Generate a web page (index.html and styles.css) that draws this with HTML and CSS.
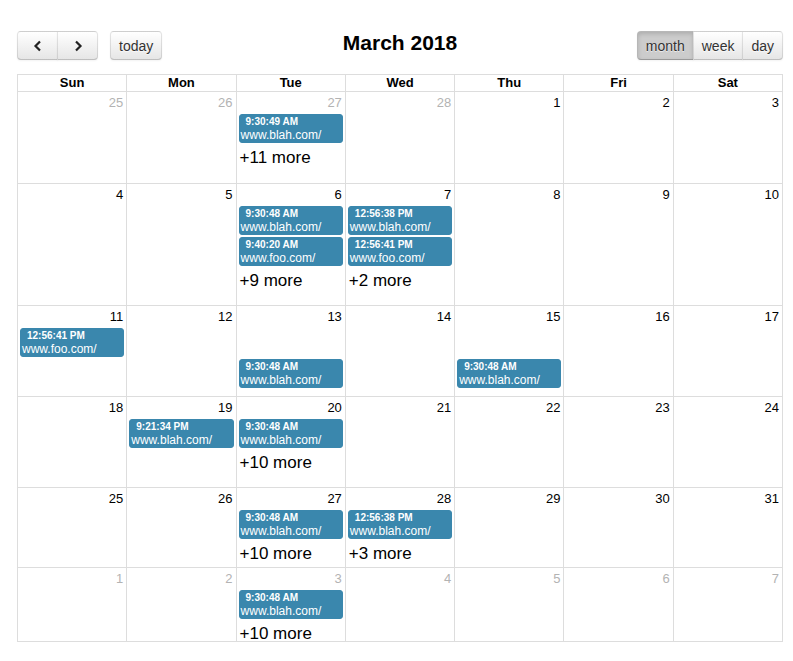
FILE: index.html
```html
<!DOCTYPE html>
<html>
<head>
<meta charset="utf-8">
<link rel="stylesheet" href="styles.css">
</head>
<body>
<div class="cal">
  <div class="toolbar">
    <div class="tb-left">
      <div class="btn-group">
        <button class="btn btn-icon"><svg width="10" height="12" viewBox="0 0 10 12"><path d="M7 1.5 L2.5 6 L7 10.5" fill="none" stroke="#222" stroke-width="2.2"/></svg></button>
        <button class="btn btn-icon"><svg width="10" height="12" viewBox="0 0 10 12"><path d="M3 1.5 L7.5 6 L3 10.5" fill="none" stroke="#222" stroke-width="2.2"/></svg></button>
      </div>
      <div class="btn-group"><button class="btn">today</button></div>
    </div>
    <h2 class="title">March 2018</h2>
    <div class="tb-right">
      <div class="btn-group">
        <button class="btn active">month</button>
        <button class="btn">week</button>
        <button class="btn">day</button>
      </div>
    </div>
  </div>

  <div class="grid">
    <div class="head">
      <div class="dow">Sun</div><div class="dow">Mon</div><div class="dow">Tue</div><div class="dow">Wed</div><div class="dow">Thu</div><div class="dow">Fri</div><div class="dow">Sat</div>
    </div>

    <div class="week wk1">
      <div class="day other"><div class="num">25</div></div>
      <div class="day other"><div class="num">26</div></div>
      <div class="day other"><div class="num">27</div>
        <div class="ev"><div class="ev-time">9:30:49 AM</div><div class="ev-title">www.blah.com/</div></div>
        <div class="more">+11 more</div>
      </div>
      <div class="day other"><div class="num">28</div></div>
      <div class="day"><div class="num">1</div></div>
      <div class="day"><div class="num">2</div></div>
      <div class="day"><div class="num">3</div></div>
    </div>

    <div class="week wk2">
      <div class="day"><div class="num">4</div></div>
      <div class="day"><div class="num">5</div></div>
      <div class="day"><div class="num">6</div>
        <div class="ev"><div class="ev-time">9:30:48 AM</div><div class="ev-title">www.blah.com/</div></div>
        <div class="ev"><div class="ev-time">9:40:20 AM</div><div class="ev-title">www.foo.com/</div></div>
        <div class="more">+9 more</div>
      </div>
      <div class="day"><div class="num">7</div>
        <div class="ev"><div class="ev-time">12:56:38 PM</div><div class="ev-title">www.blah.com/</div></div>
        <div class="ev"><div class="ev-time">12:56:41 PM</div><div class="ev-title">www.foo.com/</div></div>
        <div class="more">+2 more</div>
      </div>
      <div class="day"><div class="num">8</div></div>
      <div class="day"><div class="num">9</div></div>
      <div class="day"><div class="num">10</div></div>
    </div>

    <div class="week wk3">
      <div class="day"><div class="num">11</div>
        <div class="ev"><div class="ev-time">12:56:41 PM</div><div class="ev-title">www.foo.com/</div></div>
      </div>
      <div class="day"><div class="num">12</div></div>
      <div class="day"><div class="num">13</div>
        <div class="ev-spacer"></div>
        <div class="ev"><div class="ev-time">9:30:48 AM</div><div class="ev-title">www.blah.com/</div></div>
      </div>
      <div class="day"><div class="num">14</div></div>
      <div class="day"><div class="num">15</div>
        <div class="ev-spacer"></div>
        <div class="ev"><div class="ev-time">9:30:48 AM</div><div class="ev-title">www.blah.com/</div></div>
      </div>
      <div class="day"><div class="num">16</div></div>
      <div class="day"><div class="num">17</div></div>
    </div>

    <div class="week wk4">
      <div class="day"><div class="num">18</div></div>
      <div class="day"><div class="num">19</div>
        <div class="ev"><div class="ev-time">9:21:34 PM</div><div class="ev-title">www.blah.com/</div></div>
      </div>
      <div class="day"><div class="num">20</div>
        <div class="ev"><div class="ev-time">9:30:48 AM</div><div class="ev-title">www.blah.com/</div></div>
        <div class="more">+10 more</div>
      </div>
      <div class="day"><div class="num">21</div></div>
      <div class="day"><div class="num">22</div></div>
      <div class="day"><div class="num">23</div></div>
      <div class="day"><div class="num">24</div></div>
    </div>

    <div class="week wk5">
      <div class="day"><div class="num">25</div></div>
      <div class="day"><div class="num">26</div></div>
      <div class="day"><div class="num">27</div>
        <div class="ev"><div class="ev-time">9:30:48 AM</div><div class="ev-title">www.blah.com/</div></div>
        <div class="more">+10 more</div>
      </div>
      <div class="day"><div class="num">28</div>
        <div class="ev"><div class="ev-time">12:56:38 PM</div><div class="ev-title">www.blah.com/</div></div>
        <div class="more">+3 more</div>
      </div>
      <div class="day"><div class="num">29</div></div>
      <div class="day"><div class="num">30</div></div>
      <div class="day"><div class="num">31</div></div>
    </div>

    <div class="week wk6">
      <div class="day other"><div class="num">1</div></div>
      <div class="day other"><div class="num">2</div></div>
      <div class="day other"><div class="num">3</div>
        <div class="ev"><div class="ev-time">9:30:48 AM</div><div class="ev-title">www.blah.com/</div></div>
        <div class="more">+10 more</div>
      </div>
      <div class="day other"><div class="num">4</div></div>
      <div class="day other"><div class="num">5</div></div>
      <div class="day other"><div class="num">6</div></div>
      <div class="day other"><div class="num">7</div></div>
    </div>
  </div>
</div>
</body>
</html>
```

FILE: styles.css
```css
* { box-sizing: border-box; }
html, body { margin: 0; padding: 0; background: #fff; }
body {
  font-family: "Liberation Sans", Arial, sans-serif;
  color: #000;
}
.cal {
  padding: 31px 10px 0 17px;
}
.toolbar {
  display: grid;
  grid-template-columns: 1fr auto 1fr;
  align-items: start;
  margin-bottom: 14px;
}
.tb-left { display: flex; gap: 12px; }
.tb-right { display: flex; justify-content: flex-end; }
.title {
  margin: 0;
  font-size: 21px;
  font-weight: bold;
  line-height: 23px;
  color: #000;
}
.btn-group { display: flex; }
.btn {
  font-family: "Liberation Sans", Arial, sans-serif;
  font-size: 14px;
  height: 29px;
  padding: 0 8px;
  margin: 0;
  color: #333;
  border: 1px solid;
  border-color: rgba(0,0,0,.1) rgba(0,0,0,.1) rgba(0,0,0,.25);
  background-color: #f5f5f5;
  background-image: linear-gradient(to bottom, #fff, #e6e6e6);
  text-shadow: 0 1px 1px rgba(255,255,255,.75);
  box-shadow: inset 0 1px 0 rgba(255,255,255,.2), 0 1px 2px rgba(0,0,0,.05);
  border-radius: 0;
  cursor: pointer;
}
.btn + .btn { margin-left: -1px; }
.btn:first-child { border-top-left-radius: 4px; border-bottom-left-radius: 4px; }
.btn:last-child { border-top-right-radius: 4px; border-bottom-right-radius: 4px; }
.btn-icon {
  width: 41px;
  padding: 0;
  display: flex;
  align-items: center;
  justify-content: center;
}
.btn-icon svg { display: block; }
.btn.active {
  background-color: #ccc;
  background-image: none;
  box-shadow: inset 0 2px 4px rgba(0,0,0,.15), 0 1px 2px rgba(0,0,0,.05);
}

.grid {
  border-top: 1px solid #ddd;
  border-left: 1px solid #ddd;
}
.head, .week {
  display: grid;
  grid-template-columns: repeat(7, 1fr);
}
.dow {
  height: 17px;
  border-right: 1px solid #ddd;
  border-bottom: 1px solid #ddd;
  text-align: center;
  font-weight: bold;
  font-size: 13px;
  line-height: 16px;
}
.day {
  border-right: 1px solid #ddd;
  border-bottom: 1px solid #ddd;
  min-width: 0;
  overflow: hidden;
}
.wk1 { height: 92px; }
.wk2 { height: 122px; }
.wk3 { height: 91px; }
.wk4 { height: 91px; }
.wk5 { height: 80px; }
.wk6 { height: 74px; }

.num {
  height: 22px;
  padding: 3px 3px 0 0;
  text-align: right;
  font-size: 13px;
  line-height: 16px;
  color: #000;
}
.other .num { color: #b3b3b3; }

.ev {
  margin: 0 2px;
  padding: 0 1px;
  background: #3a87ad;
  border: 1px solid #3a87ad;
  border-radius: 3px;
  color: #fff;
  white-space: nowrap;
  overflow: hidden;
}
.ev + .ev { margin-top: 2px; }
.ev-spacer { height: 31px; }
.ev-time {
  font-size: 10px;
  font-weight: bold;
  line-height: 13px;
  padding-left: 5px;
}
.ev-title {
  font-size: 12px;
  line-height: 14px;
}
.more {
  margin: 5px 3px 0;
  font-size: 17px;
  line-height: 20px;
  color: #000;
  white-space: nowrap;
}
```
